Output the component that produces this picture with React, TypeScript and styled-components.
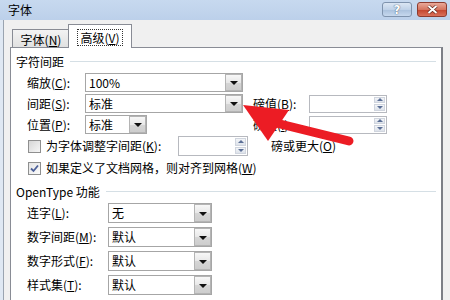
import React, { FC } from "react";
import styled, { createGlobalStyle, css } from "styled-components";

const GlobalStyle = createGlobalStyle`
  html, body {
    margin: 0;
    padding: 0;
    background: #f0f0f0;
  }
  body {
    font-family: "Noto Sans CJK SC", "DejaVu Sans", sans-serif;
    font-size: 12px;
    color: #000;
  }
  u {
    text-underline-offset: 1px;
  }
`;

const Window = styled.div`
  position: relative;
  width: 450px;
  height: 300px;
  overflow: hidden;
  display: flex;
  flex-direction: column;
  background: #dfe8f3;
`;

const TitleBar = styled.div`
  height: 20px;
  flex: none;
  display: flex;
  align-items: center;
  justify-content: space-between;
  padding: 0 3px 0 8px;
  background: linear-gradient(#c7d9ef, #bcd0ea);
`;

const Title = styled.span`
  font-size: 12px;
  line-height: 20px;
`;

const Controls = styled.div`
  display: flex;
  gap: 5px;
  align-self: flex-start;
  margin-top: 2px;
`;

const CaptionButton = styled.div<{ $kind: "help" | "close" }>`
  height: 15px;
  border-radius: 3px;
  display: flex;
  align-items: center;
  justify-content: center;
  box-sizing: border-box;
  ${(p) =>
    p.$kind === "help"
      ? css`
          width: 30px;
          border: 1px solid #7f93ad;
          background: linear-gradient(#dbe6f3 0%, #c0d2e8 50%, #a9c0dc 51%, #c6d8ee 100%);
          color: #fff;
          font-family: "DejaVu Sans", sans-serif;
          font-weight: bold;
          font-size: 12px;
          text-shadow: 0 0 1px #4d5f7a, 0 0 1px #4d5f7a;
        `
      : css`
          width: 30px;
          border: 1px solid #8d3b2f;
          background: linear-gradient(#e9a99a 0%, #d57560 50%, #c2432c 51%, #d9705a 100%);
        `}
`;

const Body = styled.div`
  flex: 1;
  display: flex;
  flex-direction: column;
  margin-left: 3px;
  border-left: 1px solid #9aa4b0;
  padding: 4px 7px 0 6px;
  background: #f0f0f0;
`;

const TabStrip = styled.div`
  display: flex;
  align-items: flex-end;
  padding-left: 2px;
  height: 23px;
  position: relative;
  z-index: 1;
`;

const Tab = styled.div<{ $active?: boolean }>`
  box-sizing: border-box;
  border: 1px solid #898c95;
  border-bottom: none;
  display: flex;
  align-items: center;
  justify-content: center;
  ${(p) =>
    p.$active
      ? css`
          height: 24px;
          width: 64px;
          margin-left: -2px;
          margin-bottom: -1px;
          background: #fff;
          padding-top: 1px;
        `
      : css`
          height: 18px;
          width: 58px;
          background: linear-gradient(#f3f3f3, #e1e1e1);
          padding-top: 1px;
        `}
`;

const FocusText = styled.span`
  outline: 1px dotted #333;
  outline-offset: 0px;
  padding: 0 2px;
  line-height: 15px;
`;

const Panel = styled.div`
  flex: 1;
  background: #fff;
  border: 1px solid #898c95;
  border-right: 2px solid #7d7f86;
  border-bottom: none;
  padding: 6px 5px 0 5px;
  display: flex;
  flex-direction: column;
`;

const Heading = styled.div<{ $mt?: number }>`
  display: flex;
  align-items: center;
  gap: 6px;
  height: 14px;
  margin-top: ${(p) => p.$mt ?? 0}px;

  &::after {
    content: "";
    flex: 1;
    height: 1px;
    background: #d5dfe5;
  }
`;

const SpacingGrid = styled.div`
  display: grid;
  grid-template-columns: 58px 168px 56px 78px;
  grid-template-rows: 19px 19px 19px;
  row-gap: 2px;
  align-items: center;
  margin: 5px 0 0 11px;
`;

const Label = styled.span`
  white-space: nowrap;
  line-height: 14px;
`;

const ComboBox = styled.div<{ $w: number; $h?: number }>`
  box-sizing: border-box;
  width: ${(p) => p.$w}px;
  height: ${(p) => p.$h ?? 19}px;
  border: 1px solid #a6a6a6;
  background: #fff;
  display: flex;
  align-items: center;
`;

const ComboValue = styled.span`
  flex: 1;
  padding-left: 3px;
  line-height: 14px;
  white-space: nowrap;
`;

const DropButton = styled.div`
  box-sizing: border-box;
  width: 17px;
  height: 100%;
  border: 1px solid #b4b4b4;
  background: linear-gradient(#f7f7f7 0%, #e8e8e8 50%, #d6d6d6 51%, #cdcdcd 100%);
  display: flex;
  align-items: center;
  justify-content: center;

  &::after {
    content: "";
    border-left: 4px solid transparent;
    border-right: 4px solid transparent;
    border-top: 4px solid #111;
    margin-top: 1px;
  }
`;

const SpinBox = styled.div<{ $w: number; $h?: number }>`
  box-sizing: border-box;
  width: ${(p) => p.$w}px;
  height: ${(p) => p.$h ?? 18}px;
  border: 1px solid #b7b9bf;
  background: #fff;
  display: flex;
  justify-content: flex-end;
  padding: 1px;
`;

const SpinButtons = styled.div`
  width: 11px;
  display: flex;
  flex-direction: column;
  gap: 1px;
`;

const SpinHalf = styled.div<{ $up?: boolean }>`
  flex: 1;
  background: linear-gradient(#f3f5f8, #dde2ea);
  border: 1px solid #d0d5de;
  box-sizing: border-box;
  display: flex;
  align-items: center;
  justify-content: center;

  &::after {
    content: "";
    border-left: 3px solid transparent;
    border-right: 3px solid transparent;
    ${(p) =>
      p.$up
        ? css`border-bottom: 3px solid #5b6f96;`
        : css`border-top: 3px solid #5b6f96;`}
  }
`;

const CheckRow = styled.div<{ $h: number; $mt: number }>`
  display: flex;
  align-items: center;
  height: ${(p) => p.$h}px;
  margin-top: ${(p) => p.$mt}px;
  padding-left: 12px;
`;

const CheckBox = styled.div<{ $checked?: boolean }>`
  box-sizing: border-box;
  width: 13px;
  height: 13px;
  border: 1px solid #8f8f8f;
  background: linear-gradient(135deg, #d6d6d6, #f6f6f6);
  margin-right: 5px;
  display: flex;
  align-items: center;
  justify-content: center;
  ${(p) =>
    p.$checked &&
    css`
      border-color: #8e8f8f;
      background: linear-gradient(135deg, #e4e4e4, #fbfbfb);
    `}
`;

const CheckText = styled.span<{ $w?: number }>`
  white-space: nowrap;
  line-height: 14px;
  ${(p) => p.$w && css`width: ${p.$w}px;`}
`;

const AfterText = styled.span`
  margin-left: 23px;
  white-space: nowrap;
  line-height: 14px;
`;

const FeatureList = styled.div`
  display: flex;
  flex-direction: column;
  gap: 4px;
  margin: 5px 0 0 11px;
`;

const FeatureRow = styled.div`
  display: grid;
  grid-template-columns: 81px 104px;
  align-items: center;
  height: 20px;
`;

const ArrowLayer = styled.svg`
  position: absolute;
  left: 0;
  top: 0;
  pointer-events: none;
`;

const Combo: FC<{ value: string; w: number; h?: number }> = ({ value, w, h }) => (
  <ComboBox $w={w} $h={h}>
    <ComboValue>{value}</ComboValue>
    <DropButton />
  </ComboBox>
);

const Spin: FC<{ w: number; h?: number }> = ({ w, h }) => (
  <SpinBox $w={w} $h={h}>
    <SpinButtons>
      <SpinHalf $up />
      <SpinHalf />
    </SpinButtons>
  </SpinBox>
);

const CheckMark = () => (
  <svg width="9" height="9" viewBox="0 0 9 9">
    <path d="M1 4.5 L3.5 7 L8 1.5" fill="none" stroke="#4b5f98" strokeWidth="1.8" />
  </svg>
);

const features = [
  { label: "连字", key: "L", value: "无" },
  { label: "数字间距", key: "M", value: "默认" },
  { label: "数字形式", key: "F", value: "默认" },
  { label: "样式集", key: "T", value: "默认" },
];

const App: FC = () => (
  <>
    <GlobalStyle />
    <Window>
      <TitleBar>
        <Title>字体</Title>
        <Controls>
          <CaptionButton $kind="help">?</CaptionButton>
          <CaptionButton $kind="close">
            <svg width="11" height="9" viewBox="0 0 11 9">
              <path d="M1.5 1 L9.5 8 M9.5 1 L1.5 8" stroke="#5a2018" strokeWidth="3.2" />
              <path d="M1.5 1 L9.5 8 M9.5 1 L1.5 8" stroke="#fff" strokeWidth="2" />
            </svg>
          </CaptionButton>
        </Controls>
      </TitleBar>
      <Body>
        <TabStrip>
          <Tab>
            字体(<u>N</u>)
          </Tab>
          <Tab $active>
            <FocusText>
              高级(<u>V</u>)
            </FocusText>
          </Tab>
        </TabStrip>
        <Panel>
          <Heading>字符间距</Heading>
          <SpacingGrid>
            <Label>
              缩放(<u>C</u>):
            </Label>
            <Combo value="100%" w={158} />
            <span />
            <span />

            <Label>
              间距(<u>S</u>):
            </Label>
            <Combo value="标准" w={158} />
            <Label>
              磅值(<u>B</u>):
            </Label>
            <Spin w={78} />

            <Label>
              位置(<u>P</u>):
            </Label>
            <Combo value="标准" w={62} />
            <Label>
              磅值(<u>I</u>):
            </Label>
            <Spin w={78} />
          </SpacingGrid>

          <CheckRow $h={20} $mt={2}>
            <CheckBox />
            <CheckText $w={132}>
              为字体调整字间距(<u>K</u>):
            </CheckText>
            <Spin w={70} h={20} />
            <AfterText>
              磅或更大(<u>O</u>)
            </AfterText>
          </CheckRow>
          <CheckRow $h={18} $mt={3}>
            <CheckBox $checked>
              <CheckMark />
            </CheckBox>
            <CheckText>
              如果定义了文档网格，则对齐到网格(<u>W</u>)
            </CheckText>
          </CheckRow>

          <Heading $mt={7}>OpenType 功能</Heading>
          <FeatureList>
            {features.map((f) => (
              <FeatureRow key={f.key}>
                <Label>
                  {f.label}(<u>{f.key}</u>):
                </Label>
                <Combo value={f.value} w={104} h={20} />
              </FeatureRow>
            ))}
          </FeatureList>
        </Panel>
      </Body>
      <ArrowLayer width="450" height="300" viewBox="0 0 450 300">
        <line x1="276" y1="123" x2="349" y2="141" stroke="#ec1c24" strokeWidth="9" strokeLinecap="round" />
        <polygon points="243,105 289,110 268,141" fill="#ec1c24" />
      </ArrowLayer>
    </Window>
  </>
);

export default App;
